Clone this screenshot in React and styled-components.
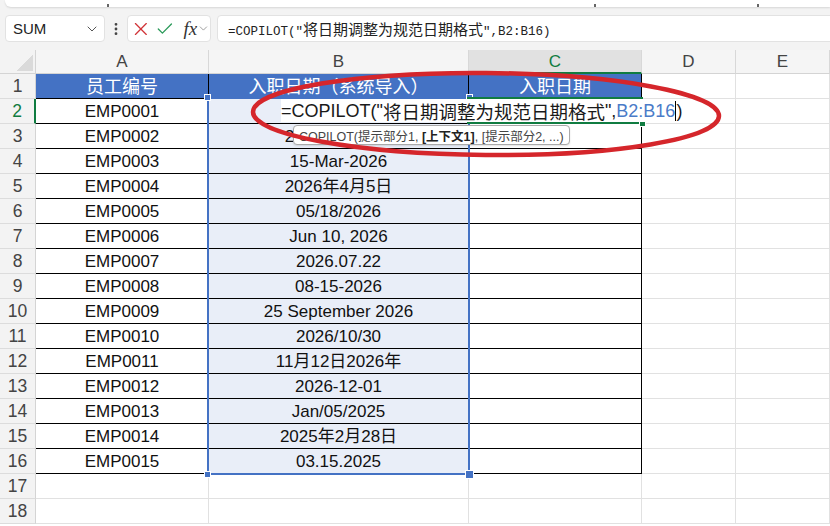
import React from "react";
import styled, { createGlobalStyle } from "styled-components";
import { X, Check, ChevronDown, EllipsisVertical } from "lucide-react";

const GlobalStyle = createGlobalStyle`
  html, body {
    margin: 0;
    padding: 0;
    background: #fff;
    overflow: hidden;
  }
  body {
    font-family: "Liberation Sans", "Noto Sans CJK SC", sans-serif;
  }
`;

const COLUMNS = ["A", "B", "C", "D", "E"];

// B2 sits under the in-cell editor, so it is left blank here
const records = [
  ["EMP0001", ""],
  ["EMP0002", "2026年3月1日"],
  ["EMP0003", "15-Mar-2026"],
  ["EMP0004", "2026年4月5日"],
  ["EMP0005", "05/18/2026"],
  ["EMP0006", "Jun 10, 2026"],
  ["EMP0007", "2026.07.22"],
  ["EMP0008", "08-15-2026"],
  ["EMP0009", "25 September 2026"],
  ["EMP0010", "2026/10/30"],
  ["EMP0011", "11月12日2026年"],
  ["EMP0012", "2026-12-01"],
  ["EMP0013", "Jan/05/2025"],
  ["EMP0014", "2025年2月28日"],
  ["EMP0015", "03.15.2025"],
];

const headers = ["员工编号", "入职日期（系统导入）", "入职日期"];

function App() {
  const rows = Array.from({ length: 18 }, (_, i) => i + 1);

  const valueAt = (r, c) => {
    if (r === 1) return headers[c] || "";
    const rec = records[r - 2];
    if (!rec || c > 1) return "";
    return rec[c];
  };

  return (
    <Page>
      <GlobalStyle />
      <Chrome>
        <RibbonEdge>
          <Tick />
          <Tick $at={485} />
          <Tick $at={161} />
        </RibbonEdge>
        <Toolbar>
          <NameBox>
            <span>SUM</span>
            <ChevronDown size={16} strokeWidth={1.5} color="#555" />
          </NameBox>
          <Grip>
            <EllipsisVertical size={16} strokeWidth={2.2} color="#444" />
          </Grip>
          <FxBox>
            <X size={22} strokeWidth={1.4} color="#d13438" />
            <Check size={20} strokeWidth={1.6} color="#2b9a5a" />
            <FxLabel>fx</FxLabel>
            <ChevronDown size={13} strokeWidth={1.5} color="#888" />
          </FxBox>
          <FormulaBox>
            <FormulaText>
              =COPILOT("<Han>将日期调整为规范日期格式</Han>",B2:B16)
            </FormulaText>
          </FormulaBox>
        </Toolbar>
      </Chrome>

      <Sheet>
        <Corner>
          <CornerMark />
        </Corner>
        {COLUMNS.map((col) => (
          <ColHead key={col} $active={col === "C"}>
            {col}
          </ColHead>
        ))}

        {rows.map((r) => (
          <React.Fragment key={r}>
            <RowHead $active={r === 2}>{r}</RowHead>
            {COLUMNS.map((col, c) => (
              <Cell
                key={col}
                $boxed={r <= 16 && c < 3}
                $head={r === 1 && c < 3}
                $sel={c === 1 && r >= 2 && r <= 16}
              >
                {valueAt(r, c)}
              </Cell>
            ))}
          </React.Fragment>
        ))}

        <Selection>
          <Handle $x="left" $y="top" />
          <Handle $x="right" $y="top" />
          <Handle $x="left" $y="bottom" />
          <Handle $x="right" $y="bottom" $big />
        </Selection>

        <ActiveFrame>
          <FillHandle />
        </ActiveFrame>

        <EditBox>
          =COPILOT("<EditHan>将日期调整为规范日期格式</EditHan>",
          <Ref>B2:B16</Ref>
          <Caret />)
        </EditBox>

        <Hint>
          COPILOT(提示部分1, <b>[上下文1]</b>, [提示部分2, ...)
        </Hint>
      </Sheet>

      <Markup viewBox="0 0 830 526" width="830" height="526">
        <ellipse
          cx="486"
          cy="114"
          rx="233"
          ry="41"
          transform="rotate(0.5 486 114)"
          fill="none"
          stroke="#d5262b"
          strokeWidth="4.5"
        />
      </Markup>
    </Page>
  );
}

const Page = styled.div`
  position: relative;
  width: 830px;
  height: 526px;
  overflow: hidden;
  background: #fff;
`;

const Chrome = styled.div`
  background: #f3f3f3;
`;

const RibbonEdge = styled.div`
  height: 7px;
  margin-left: 5px;
  background: #fff;
  border-radius: 0 0 0 6px;
  box-shadow: 0 1px 2px rgba(0, 0, 0, 0.12);
  display: flex;
  align-items: flex-end;
  padding-left: 102px;
`;

const Tick = styled.span`
  width: 2px;
  height: 3px;
  background: #666;
  margin-left: ${(p) => (p.$at ? p.$at : 0)}px;
`;

const Toolbar = styled.div`
  display: flex;
  align-items: center;
  height: 43px;
  padding-left: 5px;
  box-sizing: border-box;
`;

const Box = styled.div`
  height: 27px;
  box-sizing: border-box;
  background: #fff;
  border: 1px solid #e2e2e2;
  border-radius: 4px;
  display: flex;
  align-items: center;
`;

const NameBox = styled(Box)`
  width: 100px;
  padding: 0 4px 0 7px;
  justify-content: space-between;
  font-size: 15px;
  color: #222;
`;

const Grip = styled.div`
  width: 22px;
  display: flex;
  justify-content: center;
  align-items: center;
`;

const FxBox = styled(Box)`
  width: 84px;
  margin-right: 6px;
  padding-left: 2px;
  gap: 3px;
`;

const FxLabel = styled.span`
  font-family: "Liberation Serif", serif;
  font-style: italic;
  font-size: 19px;
  color: #333;
  margin-left: 6px;
  margin-right: -3px;
`;

const FormulaBox = styled(Box)`
  flex: 1;
  margin-right: -12px;
  padding-left: 10px;
`;

const FormulaText = styled.span`
  font-family: "Liberation Mono", monospace;
  font-size: 12.5px;
  color: #222;
  white-space: nowrap;
`;

const Han = styled.span`
  font-family: "Noto Sans CJK SC", sans-serif;
  font-size: 15px;
`;

const Sheet = styled.div`
  position: relative;
  display: grid;
  grid-template-columns: 36px 173px 260px 173px 94px 94px;
  grid-template-rows: 24px repeat(18, 25px);
  background: #fff;
  font-size: 17px;
`;

const Corner = styled.div`
  background: #f3f3f3;
  border-right: 1px solid #d4d4d4;
  border-bottom: 1px solid #d4d4d4;
  display: flex;
  align-items: flex-end;
  justify-content: flex-end;
  padding: 0 2px 2px 0;
`;

const CornerMark = styled.div`
  width: 17px;
  height: 17px;
  background: linear-gradient(135deg, transparent 50%, #dadada 50%);
`;

const ColHead = styled.div`
  box-sizing: border-box;
  background: ${(p) => (p.$active ? "#e1e1e1" : "#f5f5f5")};
  color: ${(p) => (p.$active ? "#107c41" : "#444")};
  border-right: 1px solid #d8d8d8;
  border-bottom: ${(p) => (p.$active ? "2px solid #107c41" : "1px solid #d4d4d4")};
  display: flex;
  align-items: center;
  justify-content: center;
  padding-top: 1px;
`;

const RowHead = styled.div`
  box-sizing: border-box;
  background: #f3f3f3;
  color: ${(p) => (p.$active ? "#107c41" : "#444")};
  border-right: ${(p) => (p.$active ? "2px solid #107c41" : "1px solid #d4d4d4")};
  border-bottom: 1px solid #dcdcdc;
  display: flex;
  align-items: center;
  justify-content: center;
  font-size: 17.5px;
  padding-top: 1px;
`;

const Cell = styled.div`
  box-sizing: border-box;
  border-right: 1px solid ${(p) => (p.$boxed ? "#000" : "#e1e1e1")};
  border-bottom: 1px solid ${(p) => (p.$boxed ? "#000" : "#e1e1e1")};
  background: ${(p) => (p.$head ? "#4472c4" : p.$sel ? "#e9eef8" : "#fff")};
  color: ${(p) => (p.$head ? "#fff" : "#111")};
  font-size: ${(p) => (p.$head ? "18px" : "17px")};
  line-height: 26px;
  text-align: center;
  white-space: nowrap;
  overflow: hidden;
`;

const Selection = styled.div`
  position: absolute;
  left: 207px;
  top: 47px;
  width: 263px;
  height: 378px;
  box-sizing: border-box;
  border: 2px solid #4472c4;
  pointer-events: none;
`;

const Handle = styled.span`
  position: absolute;
  width: ${(p) => (p.$big ? 7 : 5)}px;
  height: ${(p) => (p.$big ? 7 : 5)}px;
  background: #4472c4;
  border: 1px solid #fff;
  ${(p) => p.$x}: ${(p) => (p.$big ? -6 : -5)}px;
  ${(p) => p.$y}: ${(p) => (p.$big ? -6 : -5)}px;
`;

const ActiveFrame = styled.div`
  position: absolute;
  left: 467px;
  top: 47px;
  width: 176px;
  height: 27px;
  box-sizing: border-box;
  border: 2px solid #107c41;
`;

const FillHandle = styled.span`
  position: absolute;
  right: -5px;
  bottom: -5px;
  width: 5px;
  height: 5px;
  background: #107c41;
  border: 1px solid #fff;
`;

const EditBox = styled.div`
  position: absolute;
  left: 281px;
  top: 49px;
  width: 412px;
  height: 23px;
  background: #fff;
  font-size: 18px;
  line-height: 23px;
  color: #1a1a1a;
  white-space: nowrap;
  display: flex;
  align-items: center;
  padding-top: 1px;
  box-sizing: border-box;
`;

const EditHan = styled.span`
  font-family: "Noto Sans CJK SC", sans-serif;
  font-size: 18.5px;
`;

const Ref = styled.span`
  color: #4a7bc8;
`;

const Caret = styled.span`
  display: inline-block;
  width: 1px;
  height: 20px;
  background: #000;
`;

const Hint = styled.div`
  position: absolute;
  left: 293px;
  top: 75px;
  height: 20px;
  box-sizing: border-box;
  padding: 0 5px;
  display: flex;
  align-items: center;
  background: #fff;
  border: 1px solid #a9a9a9;
  border-radius: 4px;
  box-shadow: 0 1px 2px rgba(0, 0, 0, 0.12);
  font-size: 12.5px;
  color: #444;
  white-space: pre;

  b {
    color: #222;
  }
`;

const Markup = styled.svg`
  position: absolute;
  left: 0;
  top: 0;
  pointer-events: none;
`;

export default App;
